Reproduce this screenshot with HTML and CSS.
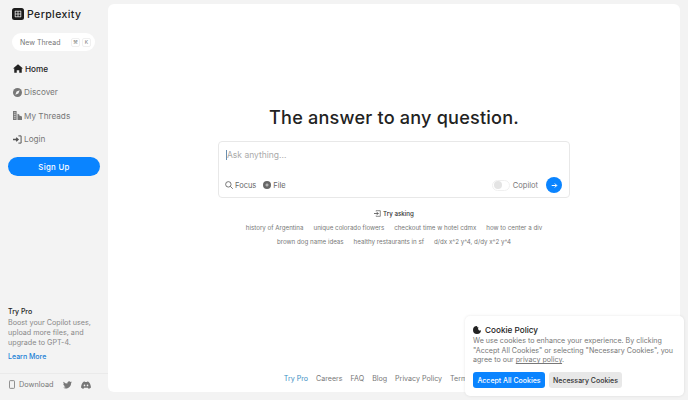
FILE: index.html
```html
<!DOCTYPE html>
<html lang="en">
<head>
<meta charset="utf-8">
<title>Perplexity</title>
<link rel="stylesheet" href="styles.css">
</head>
<body>
<div class="app">
  <aside class="sidebar">
    <div class="side-top">
      <div class="brand">
        <svg class="logo" viewBox="0 0 12 12" width="12" height="12"><rect width="12" height="12" rx="2.5" fill="#1c1c1c"/><path d="M3 3.2h6M3 6h6M3 8.8h6M3.2 3v6M6 3v6M8.8 3v6" stroke="#e8e8e8" stroke-width=".8"/></svg>
        <span>Perplexity</span>
      </div>
      <div class="new-thread"><span>New Thread</span><span class="keys"><kbd>⌘</kbd><kbd>K</kbd></span></div>
      <nav class="nav">
        <a class="nav-item active"><svg viewBox="0 0 12 10" width="10" height="9"><path d="M6 0 0 5h1.5v5h3V7h3v3h3V5H12z" fill="#222"/></svg>Home</a>
        <a class="nav-item"><svg viewBox="0 0 10 10" width="9" height="9"><circle cx="5" cy="5" r="5" fill="#777"/><path d="M7.4 2.6 6 6 2.6 7.4 4 4z" fill="#f3f3f3"/></svg>Discover</a>
        <a class="nav-item"><svg viewBox="0 0 10 10" width="9" height="9"><path d="M0 0h4v10H0zM5 3l2 1v1l3 1v4H5z" fill="#777"/><path d="M1 2h2M1 4h2M1 6h2M1 8h2" stroke="#f3f3f3" stroke-width=".7"/></svg>My Threads</a>
        <a class="nav-item"><svg viewBox="0 0 10 10" width="9" height="9"><path d="M0 5h5M3.5 3 5.7 5 3.5 7" stroke="#555" stroke-width="1.4" fill="none"/><path d="M6 1h3v8H6" stroke="#555" stroke-width="1.1" fill="none"/></svg>Login</a>
      </nav>
      <button class="signup">Sign Up</button>
    </div>
    <div class="side-bottom">
      <div class="promo">
        <div class="promo-title">Try Pro</div>
        <p class="promo-text">Boost your Copilot uses, upload more files, and upgrade to GPT-4.</p>
        <a class="promo-link">Learn More</a>
      </div>
      <div class="side-foot">
        <span class="dl"><svg viewBox="0 0 7 10" width="6" height="9"><rect x=".5" y=".5" width="6" height="9" rx="1" fill="none" stroke="#777"/></svg>Download</span>
        <svg viewBox="0 0 24 20" width="9" height="8"><path d="M24 2.4a10 10 0 0 1-2.8.8A5 5 0 0 0 23.300 .5a10 10 0 0 1-3.100 1.200 4.900 4.900 0 0 0-8.400 4.500A14 14 0 0 1 1.700 1a4.900 4.900 0 0 0 1.500 6.600 5 5 0 0 1-2.200-.6c0 2.400 1.700 4.400 3.900 4.900a5 5 0 0 1-2.200.1 5 5 0 0 0 4.600 3.400A10 10 0 0 1 0 17.400 14 14 0 0 0 7.500 19.600c9.100 0 14.300-7.700 14-14.600A10 10 0 0 0 24 2.400z" fill="#777"/></svg>
        <svg viewBox="0 0 12 9" width="10" height="8"><path d="M3 .5 4.500 .2 5 1h2L7.500 .2 9 .5C10.500 1.500 11.800 4.500 12 7.500 11 8.500 9.800 9 9 9L8.300 7.800H3.700L3 9C2.200 9 1 8.500 0 7.500.2 4.500 1.500 1.500 3 .5z" fill="#777"/><circle cx="4.200" cy="5" r="1" fill="#f3f3f3"/><circle cx="7.800" cy="5" r="1" fill="#f3f3f3"/></svg>
      </div>
    </div>
  </aside>
  <main class="main">
    <div class="center">
      <h1 class="headline">The answer to any question.</h1>
      <div class="ask">
        <div class="ask-input"><span class="caret"></span>Ask anything...</div>
        <div class="ask-bar">
          <div class="ask-left">
            <span class="tool"><svg viewBox="0 0 10 10" width="8" height="8"><circle cx="4.200" cy="4.200" r="3.400" fill="none" stroke="#555"/><path d="m6.700 6.700 3 3" stroke="#555"/></svg>Focus</span>
            <span class="tool"><svg viewBox="0 0 10 10" width="8" height="8"><circle cx="5" cy="5" r="5" fill="#666"/><path d="M5 3v4M3 5h4" stroke="#ddd"/></svg>File</span>
          </div>
          <div class="ask-right">
            <span class="toggle"><span class="knob"></span></span>
            <span class="copilot">Copilot</span>
            <span class="go"><svg viewBox="0 0 10 10" width="7" height="7"><path d="M1 5h7M5.500 2.200 8.300 5 5.500 7.800" fill="none" stroke="#fff" stroke-width="1.400"/></svg></span>
          </div>
        </div>
      </div>
      <div class="try"><svg viewBox="0 0 10 10" width="7" height="7"><path d="M0 5h6M4 3l2 2-2 2" fill="none" stroke="#333"/><path d="M3 2V1h6v8H3V8" fill="none" stroke="#333" stroke-width=".8"/></svg>Try asking</div>
      <div class="chips">
        <span>history of Argentina</span><span>unique colorado flowers</span><span>checkout time w hotel cdmx</span><span>how to center a div</span>
      </div>
      <div class="chips">
        <span>brown dog name ideas</span><span>healthy restaurants in sf</span><span>d/dx x^2 y^4, d/dy x^2 y^4</span>
      </div>
    </div>
    <footer class="foot">
      <a class="pro">Try Pro</a><a>Careers</a><a>FAQ</a><a>Blog</a><a>Privacy Policy</a><a>Terms of Service</a>
    </footer>
  </main>
</div>
<section class="cookie">
  <div class="cookie-title"><svg viewBox="0 0 10 10" width="8" height="8"><path d="M5 0a2 2 0 0 0 2 2 2 2 0 0 0 3 3A5 5 0 1 1 5 0z" fill="#222"/></svg>Cookie Policy</div>
  <p class="cookie-text">We use cookies to enhance your experience. By clicking "Accept All Cookies" or selecting "Necessary Cookies", you agree to our <u>privacy policy</u>.</p>
  <div class="cookie-actions"><button class="accept">Accept All Cookies</button><button class="necessary">Necessary Cookies</button></div>
</section>
</body>
</html>
```
FILE: styles.css
```css
* { box-sizing: border-box; }
html, body { margin: 0; height: 100%; overflow: hidden; }
body { background: #f3f3f3; font-family: "Inter", "Open Sans", sans-serif; color: #777; }
.app { display: flex; height: 400px; padding: 4px 8px 8px 0; }
.sidebar { width: 108px; flex: none; display: flex; flex-direction: column; justify-content: space-between; margin-top: -4px; margin-bottom: -8px; }
.brand { display: flex; align-items: center; gap: 3px; padding: 3px 0 0 12px; height: 25px; font-size: 10.500px; font-weight: 500; color: #222; letter-spacing: .4px; }
.new-thread { margin: 8px 13px 0 12px; height: 18px; border-radius: 9px; background: #fff; display: flex; align-items: center; justify-content: space-between; padding: 0 4px 0 8px; font-size: 7px; color: #777; white-space: nowrap; }
.keys { display: flex; gap: 2px; }
kbd { width: 9px; height: 9px; font: inherit; font-size: 5px; display: flex; align-items: center; justify-content: center; border: 1px solid #f0f0f0; border-radius: 2px; }
.nav { display: flex; flex-direction: column; padding: 6px 0 0 13px; }
.nav-item { height: 23.500px; display: flex; align-items: center; gap: 2px; font-size: 8.200px; color: #777; }
.nav-item.active { color: #222; font-weight: 500; }
.signup { display: block; margin: 6px 8px 0; width: 92px; height: 19px; border: 0; border-radius: 10px; background: #0a84ff; color: #fff; font: 500 7.800px "Inter", sans-serif; letter-spacing: .3px; }
.promo { padding: 0 8px 11px; }
.promo-title { font-size: 7px; line-height: 10px; color: #222; font-weight: 500; margin-bottom: 1px; }
.promo-text { margin: 0 0 4px; font-size: 7.200px; line-height: 10px; color: #888; }
.promo-link { display: block; font-size: 7px; line-height: 10px; color: #1a7fd6; font-weight: 500; }
.side-foot { border-top: 1px solid #eaeaea; height: 27px; display: flex; align-items: center; gap: 9px; padding: 0 0 5px 9px; font-size: 7.300px; }
.dl { display: flex; align-items: center; gap: 4px; }
.main { flex: 1; background: #fff; border-radius: 6px; display: flex; flex-direction: column; overflow: hidden; }
.center { flex: 1; display: flex; flex-direction: column; align-items: center; padding-top: 99px; }
.headline { margin: 0; font-size: 18.100px; line-height: 28px; font-weight: 500; color: #222; letter-spacing: .2px; }
.ask { width: 352px; height: 57px; margin-top: 10px; border: 1px solid #e8e8e8; border-radius: 4px; display: flex; flex-direction: column; justify-content: space-between; padding: 7px 7px 4px 6px; }
.ask-input { display: flex; align-items: center; font-size: 8.500px; color: #aaa; height: 12px; padding-left: 1px; }
.caret { width: 1px; height: 10px; background: #6a8fb0; }
.ask-bar { display: flex; justify-content: space-between; align-items: center; }
.ask-left { display: flex; gap: 7px; }
.tool { display: flex; align-items: center; gap: 2px; font-size: 7.500px; color: #666; }
.ask-right { display: flex; align-items: center; }
.toggle { width: 18px; height: 11px; border-radius: 6px; border: 1px solid #f0f0f0; display: flex; align-items: center; padding-left: 1px; }
.knob { width: 8px; height: 8px; border-radius: 50%; background: #e4e4e4; }
.copilot { font-size: 7.500px; color: #777; margin: 0 8px 0 3px; }
.go { width: 16px; height: 16px; border-radius: 50%; background: #0a84ff; display: flex; align-items: center; justify-content: center; }
.try { display: flex; align-items: center; gap: 2px; margin-top: 8px; height: 14px; font-size: 6.200px; font-weight: 500; color: #333; }
.chips { display: flex; gap: 10px; height: 14px; align-items: center; font-size: 6.200px; color: #777; white-space: nowrap; }
.foot { display: flex; justify-content: center; gap: 8px; height: 24px; padding: 6px 0 0 3px; font-size: 7.100px; line-height: 10px; color: #777; white-space: nowrap; }
.foot .pro { color: #3a8fc4; }
.cookie { position: absolute; left: 465px; top: 316px; width: 219px; height: 80px; background: #fff; border-radius: 5px; box-shadow: 0 0 3px rgba(0,0,0,.1); padding: 9px 8px 8px; }
.cookie-title { display: flex; align-items: center; gap: 4px; height: 10px; font-size: 8.200px; color: #222; font-weight: 500; }
.cookie-text { margin: 1px 0 7px; font-size: 7.100px; line-height: 9.700px; color: #777; }
.cookie-actions { display: flex; gap: 4px; }
.cookie-actions button { height: 16px; border: 0; border-radius: 3px; font: 500 7px "Inter", sans-serif; padding: 0; }
.accept { width: 72px; background: #0a84ff; color: #fff; }
.necessary { width: 73px; background: #e8e8e8; color: #333; }
```
